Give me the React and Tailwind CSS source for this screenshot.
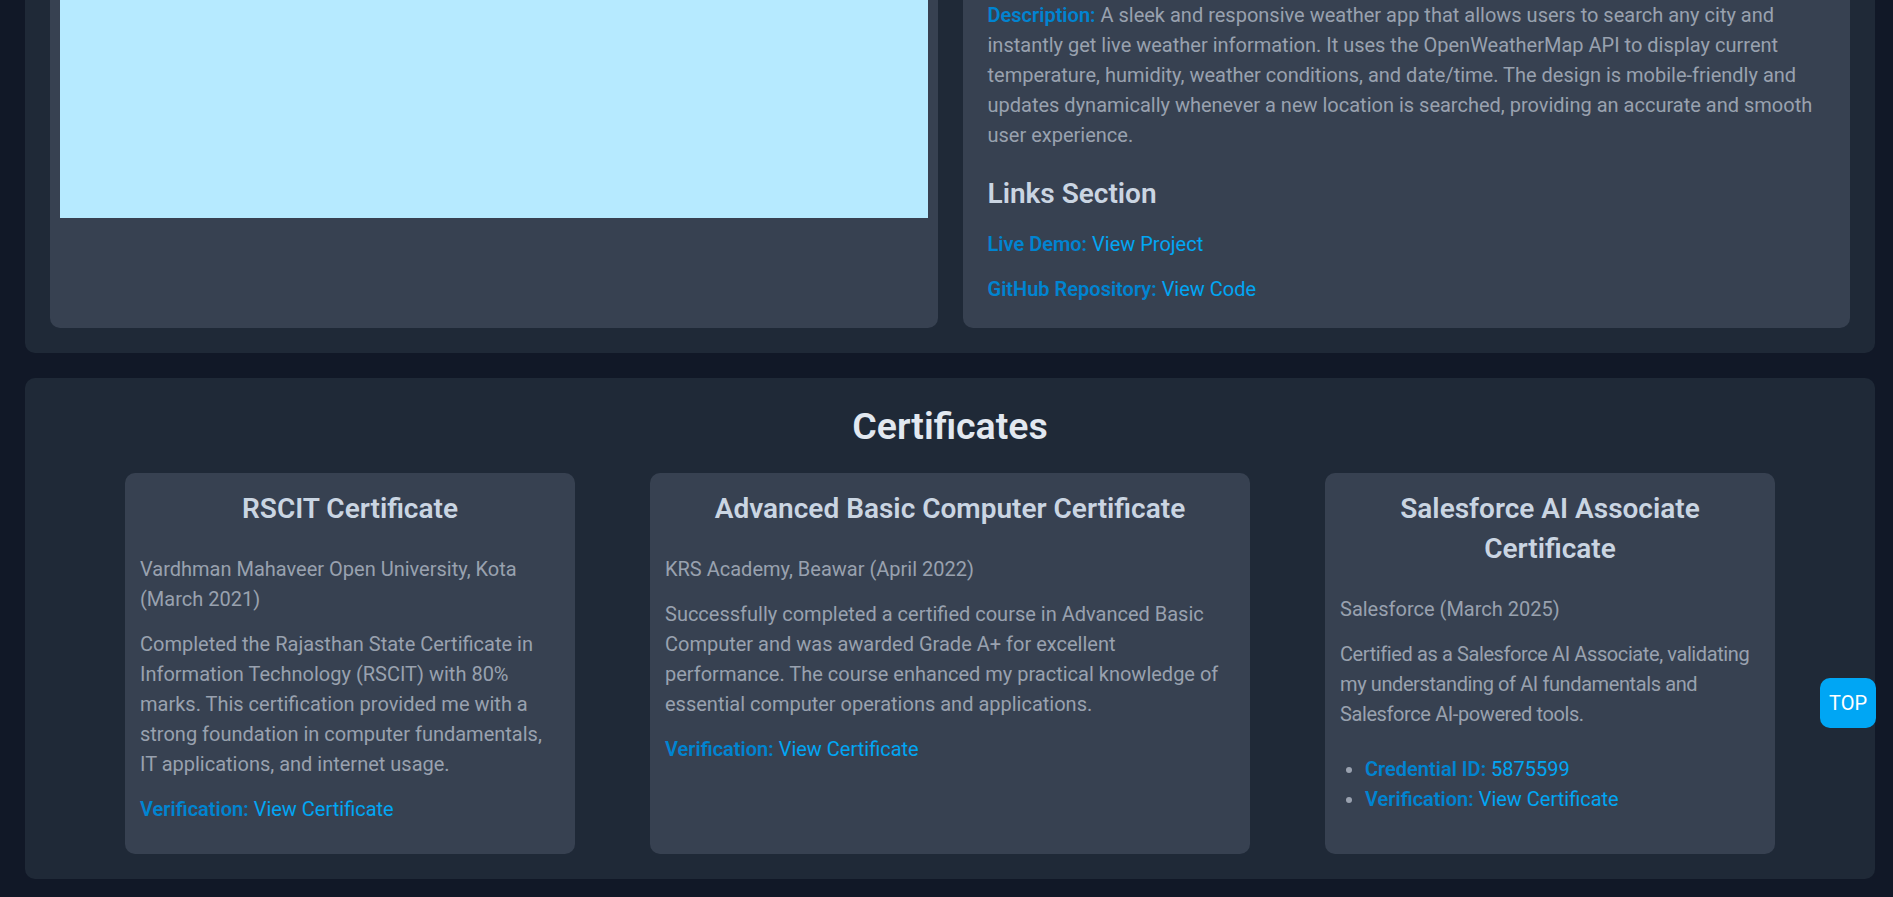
import React from "react";

const certificates = [
  {
    title: "RSCIT Certificate",
    width: "w-[450px]",
    org: "Vardhman Mahaveer Open University, Kota (March 2021)",
    text: "Completed the Rajasthan State Certificate in Information Technology (RSCIT) with 80% marks. This certification provided me with a strong foundation in computer fundamentals, IT applications, and internet usage.",
    links: [{ label: "Verification:", value: "View Certificate" }],
  },
  {
    title: "Advanced Basic Computer Certificate",
    width: "w-[600px]",
    org: "KRS Academy, Beawar (April 2022)",
    text: "Successfully completed a certified course in Advanced Basic Computer and was awarded Grade A+ for excellent performance. The course enhanced my practical knowledge of essential computer operations and applications.",
    links: [{ label: "Verification:", value: "View Certificate" }],
  },
  {
    title: "Salesforce AI Associate Certificate",
    width: "w-[450px]",
    tight: true,
    org: "Salesforce (March 2025)",
    text: "Certified as a Salesforce AI Associate, validating my understanding of AI fundamentals and Salesforce AI-powered tools.",
    list: [
      { label: "Credential ID:", value: "5875599" },
      { label: "Verification:", value: "View Certificate" },
    ],
  },
];

function LinkLine({ label, value }) {
  return (
    <a href="#" className="text-sky-500">
      <span className="font-semibold text-sky-600">{label}</span> {value}
    </a>
  );
}

function CertificateCard({ cert }) {
  return (
    <div className={`${cert.width} bg-[#374151] rounded-[10px] px-[15px] pt-[16px] pb-[15px]`}>
      <h3 className="text-center text-[28px] leading-[40px] font-semibold text-slate-300">
        {cert.title}
      </h3>
      <p className="mt-[25px] text-gray-400">{cert.org}</p>
      <p className={`mt-[15px] text-gray-400 ${cert.tight ? "tracking-[-0.4px]" : ""}`}>
        {cert.text}
      </p>
      {cert.links &&
        cert.links.map((l) => (
          <p key={l.label} className="mt-[15px]">
            <LinkLine {...l} />
          </p>
        ))}
      {cert.list && (
        <ul className="mt-[25px] mb-[25px] list-disc pl-[25px] text-gray-400">
          {cert.list.map((l) => (
            <li key={l.label}>
              <LinkLine {...l} />
            </li>
          ))}
        </ul>
      )}
    </div>
  );
}

export default function App() {
  return (
    <div className="h-screen overflow-hidden bg-[#111827] pl-[25px] pr-[18px] font-['Roboto','Liberation_Sans',sans-serif] text-[20px] leading-[30px]">
      {/* project section, scrolled so only its lower part shows */}
      <section className="grid grid-cols-2 gap-[25px] rounded-b-[10px] bg-[#1f2937] px-[25px] pb-[25px]">
        <div className="flex flex-col rounded-b-[10px] bg-[#374151] px-[10px]">
          <div className="h-[218px] bg-[#b6eaff]" />
        </div>
        <div className="rounded-b-[10px] bg-[#374151] px-[25px] pb-[24px]">
          <p className="text-gray-400">
            <span className="font-semibold text-sky-600">Description:</span> A sleek and
            responsive weather app that allows users to search any city and instantly get live
            weather information. It uses the OpenWeatherMap API to display current temperature,
            humidity, weather conditions, and date/time. The design is mobile-friendly and
            updates dynamically whenever a new location is searched, providing an accurate and
            smooth user experience.
          </p>
          <h3 className="mt-[27px] text-[28px] leading-[34px] font-semibold text-slate-300">
            Links Section
          </h3>
          <div className="mt-[18px] flex flex-col gap-[15px]">
            <p>
              <LinkLine label="Live Demo:" value="View Project" />
            </p>
            <p>
              <LinkLine label="GitHub Repository:" value="View Code" />
            </p>
          </div>
        </div>
      </section>

      <section className="mt-[25px] rounded-[10px] bg-[#1f2937] pt-[26px] pb-[25px]">
        <h2 className="text-center text-[37.5px] leading-[45px] font-semibold text-slate-200">
          Certificates
        </h2>
        <div className="mt-[24px] flex justify-center gap-[75px]">
          {certificates.map((c) => (
            <CertificateCard key={c.title} cert={c} />
          ))}
        </div>
      </section>

      <button className="fixed right-[17px] top-[678px] h-[50px] w-[56px] rounded-[10px] bg-sky-500 text-[20px] text-white">
        TOP
      </button>
    </div>
  );
}
